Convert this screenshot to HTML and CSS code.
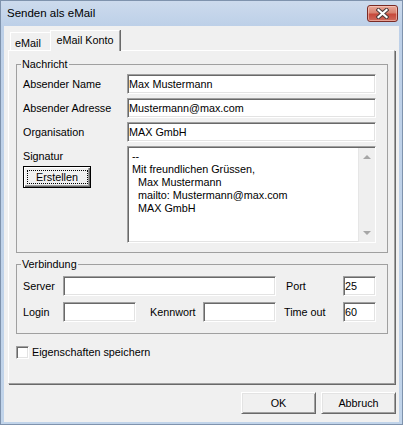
FILE: index.html
```html
<!DOCTYPE html>
<html lang="de">
<head>
    <meta charset="UTF-8">
    <title>Senden als eMail</title>
    <link rel="stylesheet" href="styles.css">
</head>
<body>
    <div class="window">
        <!-- Titelleiste -->
        <div class="titlebar">
            <span class="title">Senden als eMail</span>
            <div class="close">
                <svg width="13" height="11" viewBox="0 0 13 11">
                    <path d="M2.5 2 L10.5 9 M10.5 2 L2.5 9" stroke="#4b3b3b" stroke-width="4.2" stroke-linecap="square"/>
                    <path d="M2.5 2 L10.5 9 M10.5 2 L2.5 9" stroke="#fff" stroke-width="2.2" stroke-linecap="square"/>
                </svg>
            </div>
        </div>

        <div class="client">
            <!-- Reiter -->
            <div class="tabs">
                <div class="tab">eMail</div>
                <div class="tab active">eMail Konto</div>
            </div>

            <div class="panel">
                <fieldset class="group group-msg">
                    <legend>Nachricht</legend>
                    <div class="row">
                        <label class="lbl">Absender Name</label>
                        <input class="text wide" type="text" value="Max Mustermann">
                    </div>
                    <div class="row">
                        <label class="lbl">Absender Adresse</label>
                        <input class="text wide" type="text" value="Mustermann@max.com">
                    </div>
                    <div class="row">
                        <label class="lbl">Organisation</label>
                        <input class="text wide" type="text" value="MAX GmbH">
                    </div>
                    <div class="row sig">
                        <div class="sig-left">
                            <label class="lbl sig-lbl">Signatur</label>
                            <button class="btn btn-default"><span class="focus">Erstellen</span></button>
                        </div>
                        <div class="memo">
                            <div class="memo-text">--
Mit freundlichen Grüssen,
  Max Mustermann
  mailto: Mustermann@max.com
  MAX GmbH</div>
                            <div class="vscroll">
                                <span class="arrow up"></span>
                                <span class="arrow down"></span>
                            </div>
                        </div>
                    </div>
                </fieldset>

                <fieldset class="group group-conn">
                    <legend>Verbindung</legend>
                    <div class="row conn-row">
                        <label class="lbl-short">Server</label>
                        <input class="text server" type="text" value="">
                        <label class="lbl-port">Port</label>
                        <input class="text tiny" type="text" value="25">
                    </div>
                    <div class="row conn-row">
                        <label class="lbl-short">Login</label>
                        <input class="text small" type="text" value="">
                        <label class="lbl-pass">Kennwort</label>
                        <input class="text small" type="text" value="">
                        <label class="lbl-time">Time out</label>
                        <input class="text tiny" type="text" value="60">
                    </div>
                </fieldset>

                <div class="check-row">
                    <span class="checkbox"></span>
                    <span class="check-lbl">Eigenschaften speichern</span>
                </div>
            </div>

            <!-- Dialogknöpfe -->
            <div class="buttons">
                <button class="btn">OK</button>
                <button class="btn">Abbruch</button>
            </div>
        </div>
    </div>
</body>
</html>
```

FILE: styles.css
```css
body {
    margin: 0;
    font-family: "Liberation Sans", Arial, sans-serif;
    font-size: 10.8px;
    color: #000;
    background: #fff;
}
.window {
    width: 403px;
    height: 425px;
    box-sizing: border-box;
    padding: 0 4px 3px;
    display: flex;
    flex-direction: column;
    background: linear-gradient(#cddbed, #bdd0e8 26px, #c1d4ea);
    box-shadow: inset 0 0 0 1px #7f93ad;
    overflow: hidden;
}
.titlebar {
    height: 26px;
    flex: none;
    display: flex;
    justify-content: space-between;
    align-items: flex-start;
}
.title {
    margin: 6px 0 0 3px;
    font-size: 11.5px;
    line-height: 14px;
    color: #000;
}
.close {
    margin: 5px 1px 0 0;
    width: 31px;
    height: 17px;
    box-sizing: border-box;
    border: 1px solid #7a2a24;
    border-radius: 3px;
    background: linear-gradient(#e9a899, #d88270 45%, #c7493b 55%, #cf6a5c);
    box-shadow: inset 0 0 0 1px rgba(255, 220, 210, 0.5);
    display: flex;
    align-items: center;
    justify-content: center;
}
.client {
    flex: 1;
    background: #f0f0f0;
    display: flex;
    flex-direction: column;
}
.tabs {
    height: 24px;
    flex: none;
    display: flex;
    align-items: flex-end;
    padding-left: 6px;
}
.tab {
    box-sizing: border-box;
    height: 18px;
    width: 42px;
    padding: 4px 0 0 4px;
    line-height: 12px;
    border-top: 1px solid #fff;
    border-left: 1px solid #fff;
    border-right: 1px solid #a0a0a0;
    box-shadow: 1px 0 0 #696969;
    background: #f0f0f0;
}
.tab.active {
    height: 21px;
    width: 70px;
    margin: 0 0 -1px -2px;
    padding: 3px 0 0;
    text-align: center;
    position: relative;
    z-index: 1;
}
.panel {
    margin-left: 4px;
    width: 387px;
    height: 334px;
    box-sizing: border-box;
    border-top: 1px solid #fff;
    border-left: 1px solid #fff;
    border-right: 1px solid #a0a0a0;
    border-bottom: 1px solid #a0a0a0;
    box-shadow: 1px 1px 0 #696969;
    padding: 7px 0 0 7px;
}
.group {
    margin: 0;
    width: 372px;
    box-sizing: border-box;
    border: 1px solid #a0a0a0;
    padding: 3px 0 9px 6px;
    min-width: 0;
}
.group legend {
    padding: 0 1px;
    margin-left: -2px;
    line-height: 13px;
}
.group-conn {
    margin-top: 5px;
    padding: 5px 0 11px 6px;
}
.row {
    display: flex;
    align-items: center;
    margin-bottom: 4px;
}
.row.sig {
    align-items: flex-start;
    margin-bottom: 0;
}
.lbl {
    width: 104px;
    flex: none;
}
.sig-left {
    width: 104px;
    display: flex;
    flex-direction: column;
    align-items: flex-start;
}
.sig-lbl {
    height: 20px;
    line-height: 20px;
}
input.text {
    box-sizing: border-box;
    height: 20px;
    margin: 0;
    padding: 0 1px;
    font: inherit;
    color: #000;
    background: #fff;
    border-style: solid;
    border-width: 1px;
    border-color: #a0a0a0 #fff #fff #a0a0a0;
    box-shadow: inset 1px 1px 0 #696969, inset -1px -1px 0 #e3e3e3;
    outline: none;
}
input.wide { width: 249px; }
input.server { width: 213px; }
input.small { width: 73px; }
input.tiny { width: 33px; }
.memo {
    width: 249px;
    height: 97px;
    box-sizing: border-box;
    display: flex;
    background: #fff;
    border-style: solid;
    border-width: 1px;
    border-color: #a0a0a0 #fff #fff #a0a0a0;
    box-shadow: inset 1px 1px 0 #696969, inset -1px -1px 0 #e3e3e3;
}
.memo-text {
    flex: 1;
    padding: 3px 3px 0 4px;
    white-space: pre;
    line-height: 13px;
}
.vscroll {
    width: 17px;
    margin: 1px 0 0;
    display: flex;
    flex-direction: column;
    justify-content: space-between;
    align-items: center;
    background: #efefef;
    border-left: 1px solid #e6e6e6;
    padding: 7px 0 7px;
    box-sizing: border-box;
}
.arrow {
    width: 0;
    height: 0;
    border-left: 4px solid transparent;
    border-right: 4px solid transparent;
}
.arrow.up { border-bottom: 4px solid #a6a6a6; }
.arrow.down { border-top: 4px solid #a6a6a6; }
.conn-row:last-child { margin-bottom: 0; }
.conn-row { margin-bottom: 6px; }
.lbl-short { width: 40px; flex: none; }
.lbl-port { width: 57px; margin-left: 10px; flex: none; }
.lbl-pass { width: 53px; margin-left: 14px; flex: none; }
.lbl-time { width: 59px; margin-left: 8px; flex: none; }
.check-row {
    display: flex;
    align-items: center;
    margin-top: 12px;
    height: 13px;
}
.checkbox {
    width: 13px;
    height: 13px;
    box-sizing: border-box;
    background: #fff;
    border-style: solid;
    border-width: 1px;
    border-color: #a0a0a0 #fff #fff #a0a0a0;
    box-shadow: inset 1px 1px 0 #696969, inset -1px -1px 0 #e3e3e3;
}
.check-lbl {
    margin-left: 3px;
    line-height: 13px;
}
.buttons {
    display: flex;
    justify-content: flex-end;
    gap: 5px;
    margin-top: 8px;
    padding-right: 3px;
}
.btn {
    width: 75px;
    height: 22px;
    box-sizing: border-box;
    margin: 0;
    padding: 0;
    font: inherit;
    color: #000;
    background: #f0f0f0;
    border-style: solid;
    border-width: 1px;
    border-color: #fff #696969 #696969 #fff;
    box-shadow: inset 1px 1px 0 #e3e3e3, inset -1px -1px 0 #a0a0a0;
    display: flex;
    align-items: center;
    justify-content: center;
}
.btn-default {
    width: 68px;
    border-color: #000;
    box-shadow: inset 1px 1px 0 #fff, inset -1px -1px 0 #696969, inset -2px -2px 0 #a0a0a0;
}
.focus {
    box-sizing: border-box;
    width: 61px;
    height: 14px;
    line-height: 12px;
    border: 1px dotted #000;
    text-align: center;
}
```
